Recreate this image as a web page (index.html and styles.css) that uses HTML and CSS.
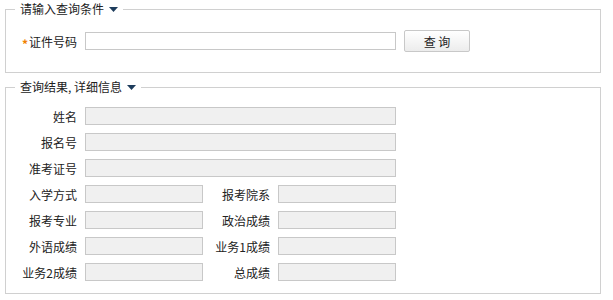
FILE: index.html
```html
<!DOCTYPE html>
<html lang="zh-CN">
<head>
    <meta charset="UTF-8">
    <title>成绩查询</title>
    <link rel="stylesheet" href="styles.css">
</head>
<body>
    <fieldset class="box box-query">
        <legend>请输入查询条件 <svg class="arrow" width="9" height="5" viewBox="0 0 9 5"><path d="M0 0H9L4.5 5Z"/></svg></legend>
        <div class="query-row">
            <label class="query-label"><span class="star">*</span>证件号码</label>
            <input type="text" class="field field-long">
            <button class="btn">查 询</button>
        </div>
    </fieldset>

    <fieldset class="box box-result">
        <legend>查询结果, 详细信息 <svg class="arrow" width="9" height="5" viewBox="0 0 9 5"><path d="M0 0H9L4.5 5Z"/></svg></legend>
        <div class="result-grid">
            <label>姓名</label>
            <input type="text" class="field wide" disabled>
            <label>报名号</label>
            <input type="text" class="field wide" disabled>
            <label>准考证号</label>
            <input type="text" class="field wide" disabled>
            <label>入学方式</label>
            <input type="text" class="field" disabled>
            <label>报考院系</label>
            <input type="text" class="field" disabled>
            <label>报考专业</label>
            <input type="text" class="field" disabled>
            <label>政治成绩</label>
            <input type="text" class="field" disabled>
            <label>外语成绩</label>
            <input type="text" class="field" disabled>
            <label>业务1成绩</label>
            <input type="text" class="field" disabled>
            <label>业务2成绩</label>
            <input type="text" class="field" disabled>
            <label>总成绩</label>
            <input type="text" class="field" disabled>
        </div>
    </fieldset>
</body>
</html>
```

FILE: styles.css
```css
body {
    margin: 0;
    padding: 1px 12px 0 5px;
    font-family: "Noto Sans CJK SC", "DejaVu Sans", sans-serif;
    font-size: 12px;
    color: #222;
    background: #ffffff;
}
.box {
    margin: 0;
    border: 1px solid #d0d0d0;
    padding: 0;
    min-width: 0;
}
.box legend {
    margin-left: 9px;
    padding: 0 5px;
    height: 16px;
    line-height: 16px;
}
.arrow {
    fill: #1d3c5c;
    margin-left: 2px;
    vertical-align: 2px;
}
.box-query {
    padding: 13px 0 20px 0;
}
.query-row {
    display: flex;
    align-items: center;
    height: 22px;
}
.query-label {
    width: 71px;
    text-align: right;
    margin-right: 8px;
}
.star {
    color: #f08000;
    font-weight: bold;
    position: relative;
    top: 2px;
    margin-right: 1px;
}
.field {
    box-sizing: border-box;
    height: 18px;
    border: 1px solid #c8c8c8;
    background: #ffffff;
    padding: 0 3px;
    margin: 0;
    font-size: 12px;
}
.field-long {
    width: 311px;
}
.field:disabled {
    background: #f0f0f0;
}
.btn {
    margin-left: 8px;
    width: 66px;
    height: 22px;
    border: 1px solid #c8c8c8;
    border-radius: 2px;
    background: linear-gradient(#ffffff, #ececec);
    font-family: inherit;
    font-size: 12px;
    color: #222;
    cursor: pointer;
}
.box-result {
    margin-top: 6px;
    padding: 12px 0 12px 0;
}
.result-grid {
    display: grid;
    grid-template-columns: 71px 118px 59px 118px;
    grid-auto-rows: 18px;
    column-gap: 8px;
    row-gap: 8px;
    align-items: center;
}
.result-grid label {
    text-align: right;
    white-space: nowrap;
}
.result-grid .field {
    width: 100%;
}
.result-grid .wide {
    grid-column: span 3;
}
```
